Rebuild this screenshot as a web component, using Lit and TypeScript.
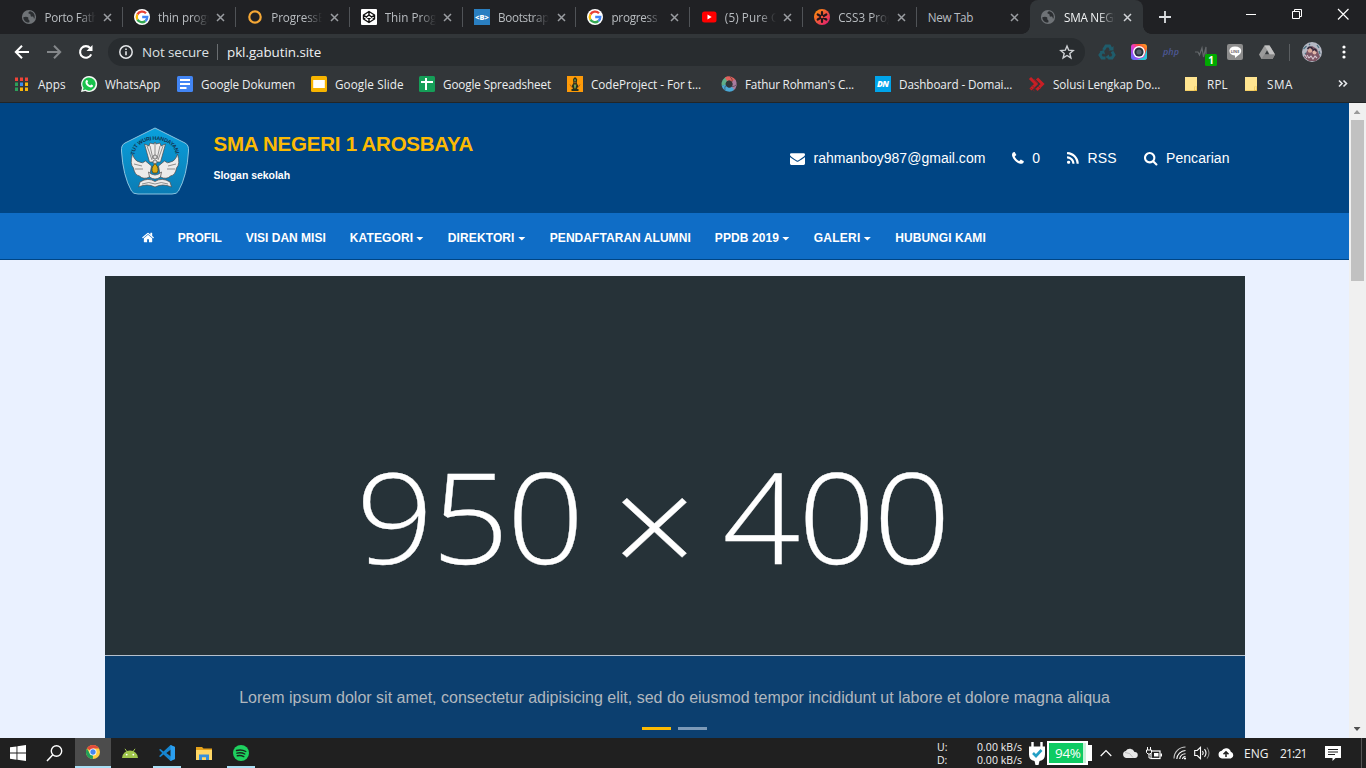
import { LitElement, html, svg, css, nothing } from "lit";

/* A single-line label whose tracking is adjusted so that it fills a given width. */
class FitText extends LitElement {
  static properties = { text: {}, w: { type: Number } };
  declare text: string;
  declare w: number;
  static styles = css`
    :host { display: inline-block; white-space: nowrap; flex: none; }
    span { display: inline-block; white-space: pre; }
  `;
  render() {
    return html`<span>${this.text}</span>`;
  }
  firstUpdated() {
    const s = this.renderRoot.querySelector("span") as HTMLElement;
    const n = s.offsetWidth;
    s.style.letterSpacing = `${(this.w - n) / this.text.length}px`;
    this.style.width = `${this.w}px`;
  }
}
customElements.define("fit-text", FitText);

const fit = (text: string, w: number) => html`<fit-text .text=${text} .w=${w}></fit-text>`;
const icon = (body: unknown, w = 16, h = w, box = `0 0 ${w} ${h}`) =>
  html`<svg class="icon" width=${w} height=${h} viewBox=${box}>${body}</svg>`;

const globe = icon(svg`<circle cx="8" cy="8" r="7.100" fill="#6f7377"/>
  <path d="M2.300 8.200C4 7.600 6 7.400 7 8.300c.8.8-.2 1.700.6 2.400.9.700 1.300 1.300.6 2.900C5 13.800 2.400 11.500 2.300 8.200z" fill="#2b2e31"/>
  <path d="M9.500 2.300c-1.800.3-2.600 1.500-1.800 2.300.7.600 1.900.2 1.900 1.300 0 1 .2 1.900 1.400 1.700 1-.2 1.600.2 1.700 1.300.1.900.5.9 1 .1.500-3-.9-5.800-4.200-6.700z" fill="#2b2e31"/>`);
const google = icon(svg`<circle cx="8" cy="8" r="8" fill="#fff"/><g fill="none" stroke-width="2.300">
  <path d="M12 4.300A5.300 5.300 0 0 0 3.400 5.400" stroke="#ea4335"/><path d="M3.400 5.400a5.300 5.300 0 0 0 0 5.200" stroke="#fbbc05"/>
  <path d="M3.400 10.600a5.300 5.300 0 0 0 8 1.400" stroke="#34a853"/><path d="M8.200 8h5.100a5.200 5.200 0 0 1-1.900 4" stroke="#4285f4"/></g>`);
const ring = icon(svg`<circle cx="8" cy="8" r="5.700" fill="none" stroke="#f5a836" stroke-width="2.200"/>`);
const codepen = icon(svg`<rect width="16" height="16" rx="1" fill="#fff"/><path d="M8 2.500 13.500 6v4L8 13.500 2.500 10V6zM8 2.500V6m0 4v3.500M2.500 6 8 10l5.500-4M2.500 10 8 6l5.500 4" fill="none" stroke="#111" stroke-width="1.400" stroke-linejoin="round"/>`);
const boots = icon(svg`<rect width="16" height="16" fill="#2a7fc1"/><text x="8" y="10.700" text-anchor="middle" font-family="Open Sans" font-weight="800" font-size="7.500" fill="#fff">&lt;B&gt;</text>`);
const youtube = icon(svg`<rect x="1" y="2.500" width="14.500" height="11" rx="2.500" fill="#f00"/><path d="M6.500 5.500v5L10.700 8z" fill="#fff"/>`);
const css3 = icon(svg`<defs><linearGradient id="o" x1="0" y1="0" x2="1" y2="1"><stop stop-color="#ff9a00"/><stop offset="1" stop-color="#e0107c"/></linearGradient></defs>
  <circle cx="8" cy="8" r="8" fill="url(#o)"/><path d="M8 3v10M3.700 5.500l8.600 5M3.700 10.500l8.600-5" stroke="#20151c" stroke-width="2.200" stroke-linecap="round"/><circle cx="8" cy="8" r="1.200" fill="#f0543c"/>`);

const tabs: [unknown, string, number][] = [
  [globe, "Porto Fath", 54], [google, "thin progr", 54], [ring, "ProgressB", 54], [codepen, "Thin Prog", 52],
  [boots, "Bootstrap", 51], [google, "progress", 46], [youtube, "(5) Pure C", 54], [css3, "CSS3 Prog", 55],
  [null, "New Tab", 46], [globe, "SMA NEGE", 56],
];

const apps = icon(["#f04438", "#f04438", "#f04438", "#2da05a", "#3b8cf0", "#f8b60c", "#2da05a", "#f8b60c", "#f8b60c"].map(
  (c, i) => svg`<rect x=${2 + (i % 3) * 5} y=${1.5 + Math.floor(i / 3) * 5} width="3" height="3.500" fill=${c}/>`));
const whatsapp = icon(svg`<path d="M8 0a8 8 0 1 1-3.700 15L0 16l1-4.200A8 8 0 0 1 8 0z" fill="#f4f8f4"/><path d="M8 1.400a6.600 6.600 0 1 1-3.500 12.200l-2.600.7.700-2.500A6.600 6.600 0 0 1 8 1.400z" fill="#19c24c"/>
  <path d="M5.300 4.200c.5-.4 1-.3 1.200.2l.5 1.200c.1.500-.6.900-.6 1.200.3 1 1.600 2.200 2.700 2.600.5 0 .8-1 1.300-.9l1.400.7c.4.300.1 1.500-.5 1.900-1.500 1-4-.2-5.300-1.600C4.300 7.900 3.900 5.400 5.300 4.200z" fill="#fff"/>`);
const docs = icon(svg`<rect width="16" height="16" rx="1.500" fill="#4285f4"/><path d="M3 4h10M3 8h10M3 12h6.500" stroke="#fff" stroke-width="1.800"/>`);
const slide = icon(svg`<rect width="16" height="16" rx="1.500" fill="#f7b400"/><rect x="2.200" y="4" width="11.600" height="8" fill="#fff"/>`);
const sheet = icon(svg`<rect width="16" height="16" rx="1.500" fill="#159e58"/><path d="M7 2v12M2 6h12" stroke="#fff" stroke-width="2"/>`);
const codeproject = icon(svg`<rect width="16" height="16" fill="#fd9a08"/><path d="M6 3.500Q8-1 10.200 3.500L9.700 7l1.600 3-1.300 3h1.500v2h-7v-2H6l-1.300-3L6.400 7z" fill="#27301d"/><path d="M6.800 3.500h2.400L8 6zM6.800 8.500h2.600l-.9 4H7.400z" fill="#78a250"/><path d="M3 8.500l2 3M13 8.500l-2 3M7 6.700h2" stroke="#a2572a" stroke-width="1"/>`);
const swirl = icon(svg`<g fill="none" stroke-width="4"><path d="M2.700 9.500A5.700 5.700 0 0 1 7 2.500" stroke="#5fae8a"/><path d="M5 3.200a5.700 5.700 0 0 1 8.200 2.500" stroke="#e0605b"/><path d="M12.500 4.500a5.700 5.700 0 0 1-1.500 8.400" stroke="#a87b9f"/><path d="M12 12.200a5.700 5.700 0 0 1-9.300-3" stroke="#4aa9d6"/></g><path d="M9 .8c2 1.500 2.500 3 2 5M15 9c-2 1.800-4 2-6 1M4 14c-.5-2.500 0-4 1.500-5" fill="none" stroke="#35393c" stroke-width=".6"/>`);
const dn = icon(svg`<rect width="16" height="16" fill="#00a4ea"/><text x="8" y="11.200" text-anchor="middle" font-family="Open Sans" font-style="italic" font-weight="800" font-size="8.500" textLength="12" fill="#fff">DN</text>`);
const solusi = icon(svg`<g fill="none" stroke="#c81f25" stroke-width="3"><path d="M1 2l6 6-5.500 5.500M8 2.500l5.500 5.500-6 6"/></g><path d="M1 11.500l4.500 3.500M3 9.500l4 4M5 3l4 4M9 10l3 3" stroke="#8b1c22" stroke-width=".9"/>`);
const folder = icon(svg`<path d="M2 1h12v10l-1 4H2z" fill="#ffe591"/><path d="M2 14.500h9.500v-4H14V15H2z" fill="#e9b93c"/><path d="M12 10.500h1.500V14H12z" fill="#ffe591"/>`);

const marks: [number, unknown, string, number][] = [
  [68, apps, "Apps", 27.5], [96, whatsapp, "WhatsApp", 55.5], [134, docs, "Google Dokumen", 94.2], [108, slide, "Google Slide", 68.2],
  [148, sheet, "Google Spreadsheet", 108], [154, codeproject, "CodeProject - For t...", 109.8], [154, swirl, "Fathur Rohman's C...", 108.5],
  [154, dn, "Dashboard - Domai...", 113.2], [154, solusi, "Solusi Lengkap Do...", 107.3], [60, folder, "RPL", 20.5], [60, folder, "SMA", 25.5],
];

const FA = {
  mail: "M1792 710v794q0 66-47 113t-113 47h-1472q-66 0-113-47t-47-113v-794q44 49 101 87 362 246 497 345 57 42 92.500 65.500t94.500 48 110 24.500h2q51 0 110-24.500t94.500-48 92.500-65.500q170-123 498-345 57-39 100-87zm0-294q0 79-49 151t-122 123q-376 261-468 325-10 7-42.500 31t-54 38.500-52 32.500-57.500 27-50 9h-2q-23 0-50-9t-57.500-27-52-32.500-54-38.500-42.500-31q-91-64-262-182.500t-205-142.500q-62-42-117-115.500t-55-136.500q0-78 41.500-130t118.500-52h1472q65 0 112.500 47t47.500 113z",
  phone: "M1600 1240q0 27-10 70.500t-21 68.500q-21 50-122 106-94 51-186 51-27 0-52.500-3.500t-57.500-12.500-47.500-14.500-55.500-20.500-49-18q-98-35-175-83-128-79-264.500-215.500t-215.500-264.500q-48-77-83-175-3-9-18-49t-20.500-55.500-14.500-47.500-12.500-57.500-3.500-52.500q0-92 51-186 56-101 106-122 25-11 68.500-21t70.500-10q14 0 21 3 18 6 53 76 11 19 30 54t35 63.500 31 53.500q3 4 17.500 25t21.500 35.500 7 28.500q0 20-28.500 50t-62 55-62 53-28.500 46q0 9 5 22.500t8.500 20.500 14 24 11.500 19q76 137 174 235t235 174q2 1 19 11.500t24 14 20.500 8.500 22.500 5q18 0 46-28.500t53-62 55-62 50-28.500q14 0 28.500 7t35.500 21.500 25 17.500q25 15 53.500 31t63.500 35 54 30q70 35 76 53 3 7 3 21z",
  rss: "M576 1344q0 80-56 136t-136 56-136-56-56-136 56-136 136-56 136 56 56 136zm512 123q2 28-17 48-18 21-47 21h-135q-25 0-43-16.500t-20-41.500q-22-229-184.500-391.500t-391.500-184.500q-25-2-41.500-20t-16.500-43v-135q0-29 21-47 17-17 43-17h5q160 13 306 80.500t259 181.500q114 113 181.500 259t80.500 306zm512 2q2 27-18 47-18 20-46 20h-143q-26 0-44.500-17.500t-19.500-42.500q-12-215-101-408.500t-231.500-336-336-231.500-408.500-102q-25-1-42.500-19.500t-17.500-43.500v-143q0-28 20-46 18-18 44-18h3q262 13 501.500 120t425.500 294q187 186 294 425.500t120 501.500z",
  search: "M1216 832q0-185-131.500-316.500t-316.500-131.500-316.500 131.500-131.500 316.500 131.500 316.500 316.500 131.500 316.500-131.500 131.500-316.500zm512 832q0 52-38 90t-90 38q-54 0-90-38l-343-342q-179 124-399 124-143 0-273.500-55.500t-225-150-150-225-55.500-273.500 55.500-273.500 150-225 225-150 273.500-55.500 273.500 55.500 225 150 150 225 55.500 273.500q0 220-124 399l343 343q37 37 37 90z",
  home: "M1472 992v480q0 26-19 45t-45 19h-384v-384h-256v384h-384q-26 0-45-19t-19-45v-480q0-1 .5-3t.5-3l575-474 575 474q1 2 1 6zm223-69l-62 74q-8 9-21 11h-3q-13 0-21-7l-692-577-692 577q-12 8-24 7-13-2-21-11l-62-74q-8-10-7-23.500t11-21.500l719-599q32-26 76-26t76 26l244 204v-195q0-14 9-23t23-9h192q14 0 23 9t9 23v408l219 182q10 8 11 21.500t-7 23.500z",
};
const fa = (d: string, x: number, w: number, em: number) =>
  html`<svg class="icon" width=${(w / 1792) * em} height=${em} viewBox="${x} 0 ${w} 1792"><path d=${d} fill="#fff"/></svg>`;

const contacts: [unknown, string, number][] = [
  [fa(FA.mail, 0, 1792, 15), "rahmanboy987@gmail.com", 171.5],
  [fa(FA.phone, 192, 1408, 15), "0", 8],
  [fa(FA.rss, 192, 1408, 15), "RSS", 29.5],
  [fa(FA.search, 64, 1664, 14.5), "Pencarian", 63.5],
];

const nav: [string, number, boolean][] = [
  ["PROFIL", 44, false], ["VISI DAN MISI", 80, false], ["KATEGORI", 63, true], ["DIREKTORI", 67, true],
  ["PENDAFTARAN ALUMNI", 141, false], ["PPDB 2019", 64, true], ["GALERI", 46.5, true], ["HUBUNGI KAMI", 90.5, false],
];

const crest = html`<svg class="crest" width="70" height="70" viewBox="0 0 70 70">
  <defs><linearGradient id="cb" x1="0" y1="0" x2="0" y2="1"><stop stop-color="#0aa0dd"/><stop offset="1" stop-color="#0b7cb4"/></linearGradient>
  <path id="arc" d="M14.500 29C15 9 55 9 55.500 29"/></defs>
  <path d="M35 2 L65 17 Q69 19 68.500 25 Q67 50 58.500 65 Q57 68 52 68 H18 Q13 68 11.500 65 Q3 50 1.500 25 Q1 19 5 17z" fill="url(#cb)" stroke="#8cc4e0" stroke-width="1"/>
  <text font-family="Liberation Sans" font-weight="700" font-size="5.500" fill="#123450"><textPath href="#arc" textLength="55">TUT WURI HANDAYANI</textPath></text>
  <g fill="#ecebea" stroke="#4e4a4a" stroke-width=".7">
    <path d="M24.500 18l4.500 2 1-3 4 1 1-2 1 2 4-1 1 3 4.500-2-5 18h-11z"/>
    <path d="M12.500 28q-3 10 1 14 1 7 6 8 4 4 10 1l2-11-6-5q-3 3-6 1-5-1-7-8z"/>
    <path d="M57.500 28q3 10-1 14-1 7-6 8-4 4-10 1l-2-11 6-5q3 3 6 1 5-1 7-8z"/>
    <path d="M20 56q8-5 15-.5 7-4.500 15 .5l1.500 5q-9-4-16.500 0-8-4-16.500 0z"/>
    <path d="M28.500 46q6.500 6 13 0l-1 5q-5.500 4-11 0z"/>
  </g>
  <path d="M30 20l3 13M40 20l-3 13M27 20l5 14M43 20l-5 14M35 18v15M14 38l8 2M15 43l8 0M56 38l-8 2M55 43l-8 0M22 58q7-3 13 0 6-3 13 0" stroke="#666" stroke-width=".7" fill="none"/>
  <circle cx="35" cy="31" r="2" fill="#ddd" stroke="#555" stroke-width=".7"/><circle cx="35" cy="36" r="2" fill="#ddd" stroke="#555" stroke-width=".7"/>
  <path d="M35 37.500q5 5 2 9.500h-4q-3-4.500 2-9.500z" fill="#dba913" stroke="#554414" stroke-width=".8"/>
</svg>`;

/* toolbar extensions */
const recycle = icon(svg`<g fill="none" stroke="#1f5c6b" stroke-width="3"><path d="M4.500 6L7 2h3.500l1.500 3M13 7.500l2 3.500-2 3H9.500M6.500 14H3l-2-3 2-3"/></g><path d="M9.500 6.500h5V2zM10 10.500v5L6.500 13zM.5 7.500L5 6l1 4.500z" fill="#1f5c6b"/>`);
const camera = icon(svg`<defs><linearGradient id="r1" x1="1" y1="0" x2="0" y2="1"><stop stop-color="#ffb01c"/><stop offset=".3" stop-color="#f8503a"/><stop offset=".5" stop-color="#f038c0"/><stop offset=".75" stop-color="#9b51f5"/><stop offset="1" stop-color="#3f80f5"/></linearGradient></defs><rect width="16" height="16" rx="3" fill="url(#r1)"/><path d="M16 5v8a3 3 0 0 1-3 3H6l7-3z" fill="#25c8d8"/><circle cx="8" cy="8" r="6" fill="#fff"/><circle cx="8" cy="8" r="4.600" fill="#26303a"/><circle cx="8" cy="8" r="2.600" fill="#56646e"/>`);
const php = icon(svg`<text x="8" y="10.500" text-anchor="middle" font-family="Open Sans" font-style="italic" font-weight="600" font-size="9" fill="#4d5896">php</text>`, 16);
const pulse = icon(svg`<path d="M0 8h3l1.500 3L7 4l1.500 9L11 3l0 8" fill="none" stroke="#63676a" stroke-width="1.200"/><rect x="10" y="10" width="12" height="12" rx="1.500" fill="#00aa00"/><text x="16" y="20" text-anchor="middle" font-family="Open Sans" font-weight="700" font-size="10" fill="#fff">1</text>`, 22, 22);
const line = icon(svg`<rect width="16" height="16" rx="2" fill="#8c8c8c"/><path d="M8 2.500c8 0 7.500 7 3 9L8 14v-2.500c-7.500-.5-7.500-9 0-9z" fill="#fff"/><text x="8" y="8.800" text-anchor="middle" font-family="Open Sans" font-weight="700" font-size="3.800" fill="#666">LINE</text>`);
const drive = icon(svg`<path d="M5.500 1.500h5L16 10.500l-2.500 4.500h-11L0 10.500z" fill="#9b9b9b"/><path d="M5.500 1.500h5L16 10.500h-5z" fill="#c2c2c2"/><path d="M8 6.300l2.300 4.200H5.700z" fill="#35393c"/><path d="M5.300 10.500H16L13.500 15h-11z" fill="#868686"/>`);
const avatar = icon(svg`<circle cx="10" cy="10" r="10" fill="#b5b8c4"/><path d="M2 15l4-8 4-3 5 3 3 8-4 4H7z" fill="#7d5564"/><circle cx="8" cy="8.500" r="2.300" fill="#d9a89b"/><circle cx="12.500" cy="10.500" r="2" fill="#e0b5a8"/><path d="M5.500 7q2.500-4 5 0M10.500 8.500q2.500-3 4 1" fill="none" stroke="#32283a" stroke-width="1.600"/><path d="M5 13l2 3 2-2 2 3 2-3 2 2M3 13l2 3" stroke="#d7c8d2" stroke-width="1.100" fill="none"/><path d="M1.500 7l3-3M15 3l2 3M3 11l1 1M7 2l1 1M17 9l1 3" stroke="#4d7382" stroke-width="1.300"/>`, 20);

/* taskbar */
const winlogo = icon(svg`<path d="M0 2.300 6.500 1.400v6.200H0zM7.400 1.300 16 0v7.600H7.400zM0 8.500h6.500v6.200L0 13.800zM7.400 8.500H16V16l-8.600-1.200z" fill="#fff"/>`);
const lens = icon(svg`<circle cx="10.500" cy="6" r="5.200" fill="none" stroke="#fff" stroke-width="1.400"/><path d="M6.800 9.800 1 16" stroke="#fff" stroke-width="1.500"/>`, 17, 17);
const chrome = icon(svg`<circle cx="7" cy="7" r="7" fill="#ffcd40"/><path d="M7 7 .9 3.500A7 7 0 0 1 13.100 3.500H7z" fill="#e24a3b"/><path d="M.9 3.500 4 8.800 7 10.500 6.800 14A7 7 0 0 1 .9 3.500z" fill="#21a05a"/><circle cx="7" cy="7" r="3.500" fill="#fff"/><circle cx="7" cy="7" r="2.700" fill="#4687f1"/>`, 14);
const android = icon(svg`<path d="M0 10a8 7.500 0 0 1 16 0z" fill="#a0c64c"/><path d="M3 .8l2 3M13 .8l-2 3" stroke="#a0c64c" stroke-width="1"/><circle cx="4.700" cy="6.600" r=".9" fill="#fff"/><circle cx="11.300" cy="6.600" r=".9" fill="#fff"/>`, 16, 11);
const vscode = icon(svg`<path d="M11.500 0 16 2v12l-4.500 2L4.500 9.500 1.500 12 0 11.200 3.200 8 0 4.800 1.500 4l3 2.500zM12 4.500 7.300 8l4.700 3.500z" fill="#1685d0"/><path d="M11.500 0 16 2v12l-4.500 2z" fill="#2b9ff0"/>`);
const explorer = icon(svg`<path d="M0 1h6l1.500 1.500H16V14H0z" fill="#e5a21b"/><path d="M0 4h16v10H0z" fill="#ffd766"/><path d="M3 14V8.500h10V14h-3v-2.800H6V14z" fill="#3690dc"/>`, 16, 15);
const spotify = icon(svg`<circle cx="8" cy="8" r="8" fill="#1ed15f"/><path d="M3.500 5.500q5-1.500 9.300 1M4 8.200q4-1.200 7.800.8M4.300 10.800q3.500-.9 6.500.8" fill="none" stroke="#17271d" stroke-width="1.400" stroke-linecap="round"/>`);

const tasks: [number, unknown, string][] = [
  [36, winlogo, ""], [36, lens, ""], [36, chrome, "active"], [37, android, ""], [37, vscode, "run"], [37, explorer, ""], [37, spotify, "run"],
];

const plug = icon(svg`<path d="M3.500 0v5M12.500 0v5" stroke="#fff" stroke-width="2.400"/><path d="M0 4.500h16v8q0 5.500-5.500 6.500L9.500 23h-3L5.500 19Q0 18 0 12.500z" fill="#fff"/><path d="M4 11l3 3 5.500-6" fill="none" stroke="#249fc4" stroke-width="2.600"/>`, 16, 23);
const cloud = icon(svg`<path d="M4 10a3.600 3.600 0 0 1-.3-7A5 5 0 0 1 12.500 4 3 3 0 0 1 13 10z" fill="#e8e8e8"/><path d="M3 4.500Q8 4 11 9.500" stroke="#aaa" fill="none" stroke-width=".7"/>`, 16, 11);
const charge = icon(svg`<rect x="5" y="4" width="9" height="7.500" fill="none" stroke="#fff" stroke-width="1.200"/><path d="M14.500 6.500h1.500v3h-1.500M8 6h4.500v3.500H8z" fill="#fff"/><path d="M1.500 0v3M4.500 0v3M.5 3h5v2.500L4 7H2L.5 5.500zM3 7v4h2" stroke="#fff" fill="#1f1f1f"/>`, 16, 13);
const wifi = icon(svg`<g fill="none" stroke="#fff" stroke-width="1.100"><path d="M1 12.500A11.500 11.500 0 0 1 12.500 1"  opacity=".75"/><path d="M3.800 13A9 9 0 0 1 12.500 4.500"/><path d="M6.700 13A6 6 0 0 1 12.500 7.700"/><path d="M9.500 13A3 3 0 0 1 12.500 10.500"/></g><circle cx="12" cy="12.500" r="1.100" fill="#fff"/>`, 13, 14);
const sound = icon(svg`<path d="M.7 4.500h2.500L6.500 1.300v11.400L3.200 9.500H.7zM8.500 5q1.500 2 0 4M10.500 3.200q3 3.800 0 7.600" fill="none" stroke="#fff" stroke-width="1.100"/><path d="M13 1.500q4 5.500 0 11" fill="none" stroke="#888" stroke-width="1.100"/>`, 16, 14);
const upload = icon(svg`<path d="M4 11.500a3.900 3.900 0 0 1-.3-7.700A5 5 0 0 1 12.800 4.800 3.500 3.500 0 0 1 12.800 11.500z" fill="#fff"/><path d="M8 10V5M5.500 7.200 8 4.700l2.500 2.500" fill="none" stroke="#1f1f1f" stroke-width="1.500"/>`, 16, 12);
const notif = icon(svg`<path d="M0 0h16v12h-5.500L7.500 15v-3H0z" fill="#fff"/><path d="M3 3.500h10M3 6h10M3 8.500h7" stroke="#1f1f1f" stroke-width="1"/>`, 16, 15);

class AppRoot extends LitElement {
  static styles = css`
    :host { display: flex; flex-direction: column; width: 1366px; height: 768px; overflow: hidden; font-family: "Open Sans", "Noto Sans", sans-serif; font-size: 12px; color: #e8eaed; }
    * { box-sizing: border-box; }
    .icon, .crest { display: block; flex: none; overflow: visible; }
    .tabs { display: flex; height: 34px; background: #202124; padding-left: 9px; flex: none; }
    .tab { display: flex; align-items: center; width: 113.400px; height: 34px; padding: 0 6.500px 0 11.500px; gap: 8px; position: relative; color: #b9bdc1; flex: none; font-size: 11.700px; }
    .tab.line::after { content: ""; position: absolute; right: -.5px; top: 7px; width: 1px; height: 20px; background: #505357; }
    .tab .title { width: 58px; margin-right: -7.500px; overflow: hidden; line-height: 18px; flex: none; -webkit-mask-image: linear-gradient(90deg, #000 34px, transparent 51px); }
    .tab.plain .title { width: 74px; margin-right: 0; -webkit-mask-image: none; }
    .tab.on { background: #323639; border-radius: 8px 8px 0 0; color: #f1f3f4; padding-left: 10.500px; }
    .tab.on::before, .tab.on::after { content: ""; position: absolute; bottom: 0; width: 8px; height: 8px; }
    .tab.on::before { left: -8px; background: radial-gradient(circle at 0 0, transparent 7.500px, #323639 8px); }
    .tab.on::after { right: -8px; background: radial-gradient(circle at 100% 0, transparent 7.500px, #323639 8px); }
    .plus { margin: 10px 0 0 15px; }
    .win { display: flex; margin-left: auto; padding: 9px 17px 0 0; gap: 36px; }
    .bar { display: flex; align-items: center; height: 36px; background: #323639; padding-left: 14px; flex: none; }
    .bar .navs { display: flex; gap: 16px; width: 94px; }
    .omni { display: flex; align-items: center; width: 977px; height: 28px; border-radius: 14px; background: #282c2f; padding: 0 10px; font-size: 13.400px; }
    .omni .sep { width: 1px; height: 16px; background: #6a6e71; margin: 0 9px 0 8px; }
    .omni .warn { margin-left: 8px; color: #dde0e3; }
    .omni .url { color: #eef0f2; }
    .omni .star { margin-left: auto; }
    .ext { display: flex; align-items: center; gap: 16px; padding-left: 14px; }
    .ext .cell { width: 16px; height: 16px; display: flex; }
    .vsep { width: 1px; height: 17px; background: #5a5e61; margin: 0 -4px 0 -2px; }
    .kebab { margin-left: 4px; }
    .marks { display: flex; align-items: center; height: 33px; padding: 0 0 5px 13px; background: #323639; border-bottom: 1px solid #222527; flex: none; font-size: 11.700px; }
    .mark { display: flex; align-items: center; gap: 8px; flex: none; color: #eceef0; }
    .mark:first-child { gap: 9px; }
    .more { margin-left: 35px; }
    .view { display: flex; height: 635px; flex: none; font-family: "Liberation Sans", Arial, sans-serif; }
    .page { width: 1349px; height: 635px; background: #eaf1ff; overflow: hidden; }
    .head { height: 110px; background: #004584; display: flex; padding: 0 119px 0 120px; }
    .crest { margin-top: 23px; }
    .brand { margin: 28px 0 0 23.500px; color: #fff; }
    .name { font-size: 20.500px; font-weight: 700; line-height: 26px; color: #fcba03; }
    .slogan { font-size: 10.500px; font-weight: 700; line-height: 14px; margin-top: 11px; }
    .contacts { display: flex; margin-left: auto; gap: 27px; align-items: center; height: 110px; font-size: 14px; color: #fff; padding-right: .5px; }
    .contact { display: flex; gap: 8.500px; align-items: center; }
    .menu { height: 47px; background: #0f6dc6; border-bottom: 1px solid #004584; display: flex; align-items: center; padding: 3px 0 0 142.200px; gap: 24px; font-size: 12px; font-weight: 700; color: #fff; }
    .link { display: flex; align-items: center; gap: 3px; }
    .caret { width: 8px; height: 4px; background: #fff; clip-path: polygon(0 0, 100% 0, 50% 100%); margin-top: 2px; }
    .slider { width: 1140px; margin: 16px 0 0 105px; }
    .shot { height: 379px; background: #263238; padding: 152px 0 0 251px; }
    .size { display: flex; width: 560px; height: 174px; color: #fff; font: 300 126px/174px "Open Sans", sans-serif; white-space: nowrap; transform: scaleX(1.08); transform-origin: 0 0; -webkit-text-stroke: .3px #fff; }
    .times { font-size: 137px; margin: 0 24px 0 27.500px; transform: translateY(8px); }
    .caption { height: 83px; border-top: 1px solid #b6c0cc; background: #0c3f6f; color: #b1b7be; font-size: 16px; text-align: center; padding: 32px 1px 0 0; line-height: 20px; }
    .dots { display: flex; justify-content: center; gap: 7px; margin-top: 19px; }
    .dot { width: 29px; height: 3px; background: #7d9ab8; }
    .dot.cur { background: #fcba03; }
    .scroll { width: 17px; background: #f0f0f0; display: flex; flex-direction: column; align-items: center; padding: 7px 1px 7px 0; }
    .up { width: 7px; height: 4px; background: #9a9a9a; clip-path: polygon(50% 0, 100% 100%, 0 100%); }
    .thumb { width: 13px; height: 161px; background: #c1c1c1; margin-top: 6px; }
    .down { width: 7px; height: 4px; background: #505050; clip-path: polygon(0 0, 100% 0, 50% 100%); margin-top: auto; }
    .task { display: flex; align-items: center; height: 30px; background: #202020; flex: none; color: #f2f2f2; }
    .app { display: flex; align-items: center; justify-content: center; height: 30px; flex: none; }
    .app:nth-child(2) { margin-right: 3px; }
    .app.active { background: #4c4c4c; border-bottom: 2px solid #a9dff5; }
    .app.run { background: linear-gradient(#a9dff5, #a9dff5) center bottom / 28px 2px no-repeat; }
    .tray { display: flex; align-items: center; margin-left: auto; }
    .net { font-size: 10.500px; line-height: 13px; width: 92px; padding-top: 1px; }
    .net .row { display: flex; gap: 28px; }
    .net .key { width: 12px; }
    .cell94 { display: flex; align-items: center; width: 46px; margin-left: 2px; }
    .body94 { width: 41px; height: 24px; border: 2px solid #fff; background: linear-gradient(90deg, #0ecb63 34px, #c9f3da 34px); font-size: 13.500px; line-height: 20px; padding-left: 6px; color: #fff; }
    .nub94 { width: 4px; height: 16px; background: #fff; }
    .chev { margin-left: 7px; }
    .status { display: flex; align-items: center; gap: 8px; margin-left: 10px; }
    .wf { margin-left: 3px; }
    .clock { display: flex; align-items: center; margin-left: 10px; gap: 12px; }
    .note { margin-left: 18px; }
    .edge { width: 1px; height: 30px; background: #555; margin: 0 4px 0 20px; }
  `;
  render() {
    const cross = (c: string) => icon(svg`<path d="M1 1l7 7M8 1l-7 7" stroke=${c} stroke-width="1.500"/>`, 9);
    return html`
      <div class="tabs">
        ${tabs.map(([ic, t, w], i) => html`<div class="tab ${i === 9 ? "on" : ""} ${i < 8 ? "line" : ""} ${ic ? "" : "plain"}">
          ${ic ?? nothing}<div class="title">${fit(t, w)}</div>${cross(i === 9 ? "#d0d3d6" : "#9a9da1")}</div>`)}
        <div class="plus">${icon(svg`<path d="M7 1v12M1 7h12" stroke="#dcdfe2" stroke-width="1.800"/>`, 14)}</div>
        <div class="win">
          ${icon(svg`<path d="M0 5.500h10" stroke="#fff"/>`, 10)}
          ${icon(svg`<path d="M.5 2.500h7v7h-7zM2.500 2.500v-2h7v7h-2" fill="none" stroke="#fff"/>`, 10)}
          ${icon(svg`<path d="M0 0l10 10M10 0L0 10" stroke="#fff" stroke-width="1.100"/>`, 11, 11, "0 0 10.500 10.500")}
        </div>
      </div>
      <div class="bar">
        <div class="navs">
          ${icon(svg`<path d="M15 8H2M8 1.800 1.800 8 8 14.200" fill="none" stroke="#fff" stroke-width="2"/>`)}
          ${icon(svg`<path d="M1 8h13M8 1.800 14.200 8 8 14.200" fill="none" stroke="#84878a" stroke-width="2"/>`)}
          ${icon(svg`<path d="M13.200 10.300A5.800 5.800 0 1 1 12.300 4.200" fill="none" stroke="#fff" stroke-width="2.100"/><path d="M14.500 1v6h-6z" fill="#fff"/>`)}
        </div>
        <div class="omni">
          ${icon(svg`<circle cx="8" cy="8" r="6.200" fill="none" stroke="#e4e6e8" stroke-width="1.500"/><path d="M8 7.200v4M8 4.500v1.600" stroke="#e4e6e8" stroke-width="1.600"/>`)}
          <span class="warn">${fit("Not secure", 67)}</span><div class="sep"></div><span class="url">${fit("pkl.gabutin.site", 94)}</span>
          <div class="star">${icon(svg`<path d="M8 2l1.700 4.200 4.500.4-3.400 2.900 1.100 4.400L8 11.500l-3.900 2.400 1.100-4.400-3.400-2.900 4.500-.4z" fill="none" stroke="#cfd2d5" stroke-width="1.400"/>`)}</div>
        </div>
        <div class="ext">
          ${[recycle, camera, php, pulse, line, drive].map((x) => html`<div class="cell">${x}</div>`)}
          <div class="vsep"></div>${avatar}
          <div class="kebab">${icon(svg`<g fill="#fff"><circle cx="2" cy="3" r="1.600"/><circle cx="2" cy="8" r="1.600"/><circle cx="2" cy="13" r="1.600"/></g>`, 4, 16)}</div>
        </div>
      </div>
      <div class="marks">
        ${marks.map(([slot, ic, t, w]) => html`<div class="mark" style="width:${slot}px">${ic}${fit(t, w)}</div>`)}
        <div class="more">${icon(svg`<path d="M1 1.500 4 4.500l-3 3M5.500 1.500l3 3-3 3" fill="none" stroke="#e8eaed" stroke-width="1.600"/>`, 10, 9)}</div>
      </div>
      <div class="view">
        <div class="page">
          <div class="head">
            ${crest}
            <div class="brand"><div class="name">${fit("SMA NEGERI 1 AROSBAYA", 260)}</div><div class="slogan">${fit("Slogan sekolah", 76.5)}</div></div>
            <div class="contacts">${contacts.map(([ic, t, w]) => html`<div class="contact">${ic}${fit(t, w)}</div>`)}</div>
          </div>
          <div class="menu">
            ${fa(FA.home, 64, 1600, 13)}
            ${nav.map(([t, w, c]) => html`<div class="link">${fit(t, w)}${c ? html`<div class="caret"></div>` : nothing}</div>`)}
          </div>
          <div class="slider">
            <div class="shot"><div class="size">${fit("950", 209.7)}<div class="times">×</div>${fit("400", 209.7)}</div></div>
            <div class="caption">
              ${fit("Lorem ipsum dolor sit amet, consectetur adipisicing elit, sed do eiusmod tempor incididunt ut labore et dolore magna aliqua", 871)}
              <div class="dots"><div class="dot cur"></div><div class="dot"></div></div>
            </div>
          </div>
        </div>
        <div class="scroll"><div class="up"></div><div class="thumb"></div><div class="down"></div></div>
      </div>
      <div class="task">
        ${tasks.map(([w, ic, c]) => html`<div class="app ${c}" style="width:${w}px">${ic}</div>`)}
        <div class="tray">
          <div class="net">
            ${["U:", "D:"].map((k) => html`<div class="row"><span class="key">${k}</span>${fit("0.00 kB/s", 45.5)}</div>`)}
          </div>
          ${plug}
          <div class="cell94"><div class="body94">${fit("94%", 26)}</div><div class="nub94"></div></div>
          <div class="chev">${icon(svg`<path d="M.7 7 6 1.500 11.300 7" fill="none" stroke="#fff" stroke-width="1.200"/>`, 12, 8)}</div>
          <div class="status">${cloud}${charge}<div class="wf">${wifi}</div>${sound}${upload}</div>
          <div class="clock">${fit("ENG", 24)}${fit("21:21", 27)}</div>
          <div class="note">${notif}</div>
          <div class="edge"></div>
        </div>
      </div>`;
  }
}
customElements.define("app-root", AppRoot);
